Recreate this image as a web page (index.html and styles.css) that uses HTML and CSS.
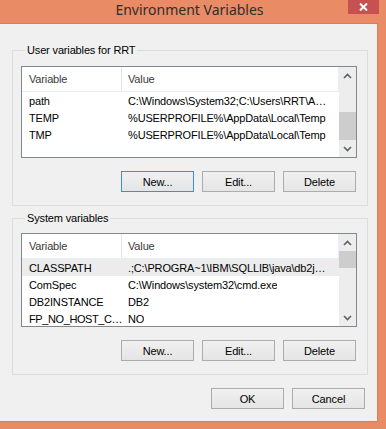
FILE: index.html
```html
<!DOCTYPE html>
<html lang="en">
<head>
    <meta charset="UTF-8">
    <title>Environment Variables</title>
    <link rel="stylesheet" href="styles.css">
</head>
<body>
    <div class="window">
        <div class="titlebar">
            <span class="title">Environment Variables</span>
            <button type="button" class="close">
                <svg width="9" height="8" viewBox="0 0 9 8"><path d="M1 0.5 L8 7.5 M8 0.5 L1 7.5" stroke="#fff" stroke-width="2"/></svg>
            </button>
        </div>

        <div class="client">
            <fieldset class="group group-user">
                <legend>User variables for RRT</legend>

                <div class="list list-user">
                    <div class="list-body">
                        <div class="list-head">
                            <span class="col-name">Variable</span>
                            <span class="col-value">Value</span>
                        </div>
                        <div class="row"><span class="col-name">path</span><span class="col-value">C:\Windows\System32;C:\Users\RRT\A…</span></div>
                        <div class="row"><span class="col-name">TEMP</span><span class="col-value">%USERPROFILE%\AppData\Local\Temp</span></div>
                        <div class="row"><span class="col-name">TMP</span><span class="col-value">%USERPROFILE%\AppData\Local\Temp</span></div>
                    </div>
                    <div class="scrollbar">
                        <span class="arrow"><svg width="9" height="6" viewBox="0 0 9 6"><path d="M1 5 L4.5 1.5 L8 5" fill="none" stroke="#606060" stroke-width="1.6"/></svg></span>
                        <span class="thumb thumb-end"></span>
                        <span class="arrow"><svg width="9" height="6" viewBox="0 0 9 6"><path d="M1 1 L4.5 4.5 L8 1" fill="none" stroke="#606060" stroke-width="1.6"/></svg></span>
                    </div>
                </div>

                <div class="actions">
                    <button type="button" class="btn btn-focus">New...</button>
                    <button type="button" class="btn">Edit...</button>
                    <button type="button" class="btn">Delete</button>
                </div>
            </fieldset>

            <fieldset class="group group-system">
                <legend>System variables</legend>

                <div class="list list-system">
                    <div class="list-body">
                        <div class="list-head">
                            <span class="col-name">Variable</span>
                            <span class="col-value">Value</span>
                        </div>
                        <div class="row row-selected"><span class="col-name">CLASSPATH</span><span class="col-value">.;C:\PROGRA~1\IBM\SQLLIB\java\db2j…</span></div>
                        <div class="row"><span class="col-name">ComSpec</span><span class="col-value">C:\Windows\system32\cmd.exe</span></div>
                        <div class="row"><span class="col-name">DB2INSTANCE</span><span class="col-value">DB2</span></div>
                        <div class="row"><span class="col-name col-tight">FP_NO_HOST_C…</span><span class="col-value">NO</span></div>
                    </div>
                    <div class="scrollbar">
                        <span class="arrow"><svg width="9" height="6" viewBox="0 0 9 6"><path d="M1 5 L4.5 1.5 L8 5" fill="none" stroke="#606060" stroke-width="1.6"/></svg></span>
                        <span class="thumb thumb-start"></span>
                        <span class="arrow"><svg width="9" height="6" viewBox="0 0 9 6"><path d="M1 1 L4.5 4.5 L8 1" fill="none" stroke="#606060" stroke-width="1.6"/></svg></span>
                    </div>
                </div>

                <div class="actions">
                    <button type="button" class="btn">New...</button>
                    <button type="button" class="btn">Edit...</button>
                    <button type="button" class="btn">Delete</button>
                </div>
            </fieldset>

            <div class="dialog-actions">
                <button type="button" class="btn">OK</button>
                <button type="button" class="btn">Cancel</button>
            </div>
        </div>
    </div>
</body>
</html>
```

FILE: styles.css
```css
body {
    margin: 0;
    background-color: #e98b64;
    font-family: 'Liberation Sans', Arial, sans-serif;
    font-size: 11px;
    letter-spacing: -0.15px;
    color: #000;
}

.window {
    width: 386px;
    height: 429px;
    display: flex;
    flex-direction: column;
}

/* title bar */
.titlebar {
    position: relative;
    height: 23px;
    display: flex;
    justify-content: center;
    padding-right: 7px;
}

.title {
    font-family: 'Noto Sans', sans-serif;
    font-size: 14px;
    letter-spacing: 0;
    line-height: 20px;
    color: #2e2e2e;
}

.close {
    position: absolute;
    top: 0;
    left: 348px;
    width: 31px;
    height: 14px;
    padding: 0;
    border: none;
    background-color: #c75050;
    display: flex;
    justify-content: center;
    align-items: center;
}

/* dialog body */
.client {
    width: 378px;
    height: 399px;
    box-sizing: border-box;
    background-color: #f0f0f0;
    border-top: 1px solid #d47e5a;
    border-right: 1px solid #d47e5a;
    border-bottom: 1px solid #d47e5a;
    padding: 18px 10px 0 12px;
}

.group {
    margin: 0;
    min-width: 0;
    width: 356px;
    box-sizing: border-box;
    border: 1px solid #dcdcdc;
    padding: 8px 10px 13px 8px;
}

.group legend {
    padding: 0 2px;
    margin-left: 4px;
    line-height: 16px;
}

.group-system {
    margin-top: 4px;
    padding-top: 7px;
}

/* list view */
.list {
    display: flex;
    border: 1px solid #828790;
    background-color: #fff;
    height: 92px;
    box-sizing: border-box;
}

.list-system {
    height: 94px;
}

.list-body {
    flex: 1;
    overflow: hidden;
}

.list-head {
    display: flex;
    height: 24px;
    align-items: center;
    border-bottom: 1px solid #e6eef7;
    border-right: 1px solid #e6eef7;
    color: #3a3a3a;
}

.row {
    display: flex;
    height: 17px;
    align-items: center;
    white-space: nowrap;
}

.list-head .col-name {
    align-self: stretch;
    display: flex;
    align-items: center;
    border-right: 1px solid #e5e5e5;
}

.col-name {
    width: 99px;
    flex: none;
    padding-left: 7px;
    box-sizing: border-box;
}

.col-tight {
    letter-spacing: -0.4px;
}

.list-head .col-name {
    width: 100px;
}

.col-value {
    padding-left: 6px;
    white-space: nowrap;
    overflow: hidden;
}

.row .col-value {
    padding-left: 7px;
}

.row-selected {
    background-color: #ececec;
}

/* scrollbar */
.scrollbar {
    width: 17px;
    flex: none;
    display: flex;
    flex-direction: column;
    background-color: #ededed;
}

.arrow {
    height: 17px;
    flex: none;
    display: flex;
    justify-content: center;
    align-items: center;
}

.thumb {
    background-color: #cdcdcd;
}

.thumb-end {
    margin-top: auto;
    height: 28px;
}

.thumb-start {
    height: 17px;
    margin-bottom: auto;
}

/* buttons */
.actions {
    display: flex;
    justify-content: flex-end;
    gap: 8px;
    margin-top: 13px;
    padding-right: 1px;
}

.dialog-actions {
    display: flex;
    justify-content: flex-end;
    gap: 8px;
    margin-top: 13px;
    padding-right: 2px;
}

.btn {
    width: 73px;
    height: 21px;
    padding: 0;
    font-family: inherit;
    font-size: 11px;
    letter-spacing: inherit;
    color: #000;
    border: 1px solid #acacac;
    background: linear-gradient(#f0f0f0, #e5e5e5);
}

.btn-focus {
    border-color: #3c8de0;
}
```
